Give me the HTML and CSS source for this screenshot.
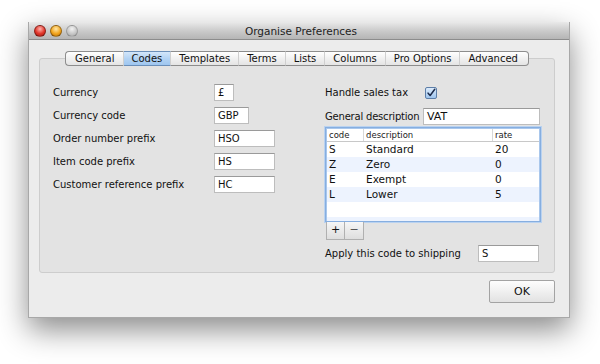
FILE: index.html
```html
<!DOCTYPE html>
<html lang="en">
<head>
    <meta charset="UTF-8">
    <title>Organise Preferences</title>
    <link rel="stylesheet" href="styles.css">
</head>
<body>
    <div class="window">
        <div class="titlebar">
            <div class="lights">
                <span class="light red"></span>
                <span class="light amber"></span>
                <span class="light off"></span>
            </div>
            <div class="title">Organise Preferences</div>
        </div>

        <div class="body">
            <div class="tabs">
                <span class="tab">General</span>
                <span class="tab selected">Codes</span>
                <span class="tab">Templates</span>
                <span class="tab">Terms</span>
                <span class="tab">Lists</span>
                <span class="tab">Columns</span>
                <span class="tab">Pro Options</span>
                <span class="tab">Advanced</span>
            </div>

            <div class="panel">
                <!-- Left column: prefixes -->
                <div class="col-left">
                    <div class="row">
                        <label class="label">Currency</label>
                        <div class="field w-xs">£</div>
                    </div>
                    <div class="row">
                        <label class="label">Currency code</label>
                        <div class="field w-sm">GBP</div>
                    </div>
                    <div class="row">
                        <label class="label">Order number prefix</label>
                        <div class="field w-md">HSO</div>
                    </div>
                    <div class="row">
                        <label class="label">Item code prefix</label>
                        <div class="field w-md">HS</div>
                    </div>
                    <div class="row">
                        <label class="label">Customer reference prefix</label>
                        <div class="field w-md">HC</div>
                    </div>
                </div>

                <!-- Right column: sales tax -->
                <div class="col-right">
                    <div class="row">
                        <label class="label tax-label">Handle sales tax</label>
                        <span class="checkbox">
                            <svg width="12" height="12" viewBox="0 0 12 12">
                                <path d="M2.5 6.2 L5 9 L10.5 1.5" fill="none" stroke="#1b2a4a" stroke-width="1.8" stroke-linecap="round" stroke-linejoin="round"/>
                            </svg>
                        </span>
                    </div>
                    <div class="row">
                        <label class="label desc-label">General description</label>
                        <div class="field w-lg big">VAT</div>
                    </div>

                    <div class="table">
                        <div class="thead">
                            <span class="c-code">code</span>
                            <span class="c-desc">description</span>
                            <span class="c-rate">rate</span>
                        </div>
                        <div class="tr">
                            <span class="c-code">S</span><span class="c-desc">Standard</span><span class="c-rate">20</span>
                        </div>
                        <div class="tr alt">
                            <span class="c-code">Z</span><span class="c-desc">Zero</span><span class="c-rate">0</span>
                        </div>
                        <div class="tr">
                            <span class="c-code">E</span><span class="c-desc">Exempt</span><span class="c-rate">0</span>
                        </div>
                        <div class="tr alt">
                            <span class="c-code">L</span><span class="c-desc">Lower</span><span class="c-rate">5</span>
                        </div>
                        <div class="tr"></div>
                        <div class="tr alt"></div>
                    </div>

                    <div class="table-buttons">
                        <span class="sq-btn">+</span>
                        <span class="sq-btn">−</span>
                    </div>

                    <div class="row ship-row">
                        <label class="label ship-label">Apply this code to shipping</label>
                        <div class="field w-md">S</div>
                    </div>
                </div>
            </div>

            <div class="footer">
                <button class="ok-button">OK</button>
            </div>
        </div>
    </div>
</body>
</html>
```

FILE: styles.css
```css
* {
    margin: 0;
    padding: 0;
    box-sizing: border-box;
}

body {
    font-family: 'DejaVu Sans', sans-serif;
    font-size: 10px;
    color: #111;
    background: #fff;
    width: 600px;
    height: 364px;
    overflow: hidden;
}

.window {
    margin: 22px 0 0 28px;
    width: 542px;
    height: 296px;
    background: #ececec;
    border: 1px solid #a8a8a8;
    border-top: none;
    box-shadow: 0 12px 28px rgba(0, 0, 0, 0.45);
}

.titlebar {
    height: 18px;
    background: linear-gradient(#e9e9e9, #c9c9c9 55%, #b5b5b5);
    border-bottom: 1px solid #8c8c8c;
    border-radius: 4px 4px 0 0;
    display: flex;
    align-items: center;
}

.lights {
    display: flex;
    gap: 4px;
    padding-left: 5px;
}

.light {
    width: 12px;
    height: 12px;
    border-radius: 50%;
    border: 1px solid rgba(0, 0, 0, 0.35);
}

.light.red {
    background: radial-gradient(circle at 50% 30%, #ffb3ad, #e0352a 55%, #a31a12);
}

.light.amber {
    background: radial-gradient(circle at 50% 30%, #ffe7a8, #f2a51e 55%, #b86a05);
}

.light.off {
    background: radial-gradient(circle at 50% 30%, #f2f2f2, #c4c4c4 60%, #a2a2a2);
    border-color: rgba(0, 0, 0, 0.2);
}

.title {
    flex: 1;
    text-align: center;
    font-size: 10.5px;
    color: #222;
    margin-left: -45px;
}

.body {
    padding: 11px 14px 0 10px;
}

.tabs {
    display: flex;
    justify-content: center;
    position: relative;
    z-index: 1;
    height: 15px;
    margin-bottom: -8px;
}

.tab {
    height: 15px;
    line-height: 14px;
    padding: 0 8px;
    background: linear-gradient(#ffffff, #f1f1f1 50%, #e4e4e4);
    border-top: 1px solid #8d8d8d;
    border-bottom: 1px solid #8d8d8d;
    border-right: 1px solid #cfcfcf;
    color: #111;
    white-space: nowrap;
}

.tab:first-child {
    border-left: 1px solid #8d8d8d;
    border-radius: 4px 0 0 4px;
    padding-left: 9px;
}

.tab:last-child {
    border-right: 1px solid #8d8d8d;
    border-radius: 0 4px 4px 0;
    padding-right: 10px;
}

.tab.selected {
    background: linear-gradient(#d3e6fa, #b3d3f4 50%, #9ec6f0);
    border-top-color: #6b8fb9;
    border-bottom-color: #6b8fb9;
}

.panel {
    height: 215px;
    background: #e3e3e3;
    border: 1px solid #cdcdcd;
    border-radius: 3px;
    display: flex;
    padding: 25px 0 0 13px;
}

.col-left {
    width: 272px;
    display: flex;
    flex-direction: column;
    gap: 6px;
}

.col-right {
    width: 216px;
    display: flex;
    flex-direction: column;
}

.row {
    display: flex;
    align-items: center;
    height: 17px;
}

.label {
    width: 161px;
    flex-shrink: 0;
    white-space: nowrap;
}

.field {
    height: 17px;
    line-height: 16px;
    background: #fff;
    border: 1px solid #bdbdbd;
    border-top-color: #9a9a9a;
    padding-left: 3px;
    font-size: 10px;
}

.field.big {
    font-size: 11px;
}

.w-xs { width: 20px; }
.w-sm { width: 35px; }
.w-md { width: 61px; }
.w-lg { width: 117px; }

.tax-label {
    width: 100px;
}

.desc-label {
    width: 98px;
    letter-spacing: -0.2px;
}

.col-right .row + .row {
    margin-top: 7px;
}

.checkbox {
    width: 12px;
    height: 12px;
    border: 1px solid #5d7ea8;
    border-radius: 2px;
    background: linear-gradient(#dcebfb, #9fc5ee);
    display: flex;
    align-items: center;
    justify-content: center;
}

.table {
    margin-top: 2px;
    height: 95px;
    background: #fff;
    border: 1px solid #86aee0;
    box-shadow: 0 0 0 1px #b9d2f0, inset 0 0 0 1px #a9c7ec;
    padding: 1px;
    overflow: hidden;
}

.thead {
    display: flex;
    height: 13px;
    line-height: 12px;
    font-size: 8.5px;
    border-bottom: 1px solid #c8c8c8;
    color: #222;
}

.thead span {
    border-right: 1px solid #d8d8d8;
}

.thead span:last-child {
    border-right: none;
}

.tr {
    display: flex;
    height: 15px;
    line-height: 15px;
    font-size: 10.5px;
}

.tr.alt {
    background: #edf3fe;
}

.c-code {
    width: 37px;
    padding-left: 2px;
}

.c-desc {
    width: 129px;
    padding-left: 2px;
}

.c-rate {
    flex: 1;
    padding-left: 2px;
}

.table-buttons {
    display: flex;
    padding-left: 1px;
}

.sq-btn {
    width: 19px;
    height: 18px;
    line-height: 16px;
    text-align: center;
    background: linear-gradient(#f6f6f6, #dedede);
    border: 1px solid #b0b0b0;
    border-top: none;
    font-size: 11px;
}

.sq-btn + .sq-btn {
    border-left: none;
    color: #555;
}

.col-right .ship-row {
    margin-top: 5px;
}

.ship-label {
    width: 153px;
}

.footer {
    display: flex;
    justify-content: flex-end;
    margin-top: 7px;
}

.ok-button {
    width: 66px;
    height: 23px;
    font-family: 'DejaVu Sans', sans-serif;
    font-size: 11px;
    color: #111;
    background: linear-gradient(#fdfdfd, #f0f0f0 50%, #e2e2e2);
    border: 1px solid #a3a3a3;
    border-radius: 2px;
}
```
